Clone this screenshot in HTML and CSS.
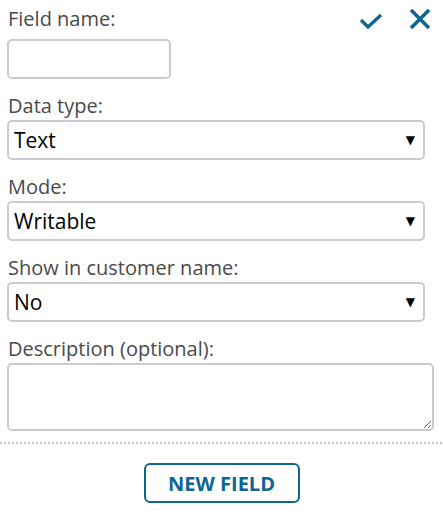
FILE: index.html
```html
<!DOCTYPE html>
<html>
<head>
<meta charset="utf-8">
<link rel="stylesheet" href="styles.css">
</head>
<body>
<div class="panel">
  <div class="header">
    <span class="label">Field name:</span>
    <div class="actions">
      <svg class="icon check" width="24" height="18" viewBox="0 0 24 18"><path d="M2 8 L9 15 L22 3" fill="none" stroke="#0e6590" stroke-width="3.2"/></svg>
      <svg class="icon close" width="22" height="22" viewBox="0 0 22 22"><path d="M2 2 L20 20 M20 2 L2 20" fill="none" stroke="#0e6590" stroke-width="3.6"/></svg>
    </div>
  </div>
  <input class="text-input" type="text">

  <div class="row">
    <div class="label">Data type:</div>
    <div class="select"><span>Text</span><span class="arrow">▼</span></div>
  </div>
  <div class="row">
    <div class="label">Mode:</div>
    <div class="select"><span>Writable</span><span class="arrow">▼</span></div>
  </div>
  <div class="row">
    <div class="label">Show in customer name:</div>
    <div class="select"><span>No</span><span class="arrow">▼</span></div>
  </div>
  <div class="row">
    <div class="label">Description (optional):</div>
    <textarea class="textarea"></textarea>
  </div>
  <div class="divider"></div>
  <div class="footer">
    <button class="btn">NEW FIELD</button>
  </div>
</div>
</body>
</html>
```

FILE: styles.css
```css
html, body {
  margin: 0;
  padding: 0;
  background: #fff;
}
body {
  font-family: "Open Sans", "Liberation Sans", sans-serif;
}
.panel {
  padding: 6px 0 0 0;
}
.header {
  display: flex;
  align-items: flex-start;
  justify-content: space-between;
  height: 33px;
  padding-left: 8px;
}
.label {
  font-size: 20px;
  line-height: 26px;
  color: #4a4a4a;
}
.actions {
  display: flex;
  gap: 26px;
  padding-right: 12px;
  padding-top: 2px;
}
.icon { display: block; }
.check { margin-top: 4px; }
.text-input {
  display: block;
  box-sizing: border-box;
  margin: 0 0 0 7px;
  width: 164px;
  height: 40px;
  border: 2px solid #c9ccce;
  border-radius: 5px;
  outline: none;
  padding: 0 6px;
}
.row {
  margin-top: 14px;
  padding-left: 7px;
}
.row .label {
  padding-left: 1px;
  margin-bottom: 1px;
}
.select {
  box-sizing: border-box;
  width: 418px;
  height: 40px;
  border: 2px solid #c9ccce;
  border-radius: 5px;
  display: flex;
  align-items: center;
  justify-content: space-between;
  padding: 0 8px 0 5px;
  font-size: 21px;
  color: #000;
}
.arrow {
  font-size: 12px;
  font-family: "DejaVu Sans", sans-serif;
}
.textarea {
  display: block;
  box-sizing: border-box;
  width: 427px;
  height: 68px;
  margin: 0;
  border: 2px solid #c9ccce;
  border-radius: 5px;
  outline: none;
  font-family: inherit;
}
.divider {
  margin-top: 11px;
  height: 2px;
  background: repeating-linear-gradient(to right, #c4c4c4 0 2px, transparent 2px 4px);
}
.footer {
  display: flex;
  justify-content: center;
  padding-top: 19px;
}
.btn {
  box-sizing: border-box;
  width: 156px;
  height: 40px;
  border: 2px solid #0e6590;
  border-radius: 6px;
  background: #fff;
  color: #0e6590;
  font-family: "Open Sans", sans-serif;
  font-weight: 700;
  font-size: 20px;
  padding: 0;
}
```
